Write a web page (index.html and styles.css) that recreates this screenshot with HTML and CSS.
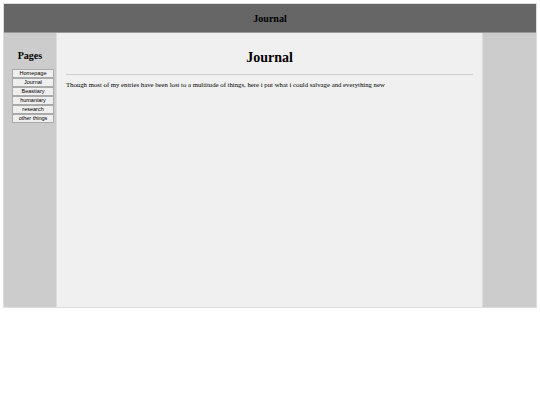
FILE: index.html
```html
<!DOCTYPE html>
<html>
<head>
<meta charset="utf-8">
<link rel="stylesheet" href="styles.css">
</head>
<body>
<div class="page">
  <div class="header">Journal</div>
  <div class="columns">
    <div class="side left">
      <h2 class="side-title">Pages</h2>
      <div class="nav">
        <button class="nav-btn">Homepage</button>
        <button class="nav-btn">Journal</button>
        <button class="nav-btn">Beastiary</button>
        <button class="nav-btn">humaniary</button>
        <button class="nav-btn">research</button>
        <button class="nav-btn">other things</button>
      </div>
    </div>
    <div class="main">
      <h1 class="title">Journal</h1>
      <hr class="rule">
      <p class="text">Though most of my entries have been lost to a multitude of things, here i put what i could salvage and everything new</p>
    </div>
    <div class="side right"></div>
  </div>
</div>
</body>
</html>
```
FILE: styles.css
```css
html, body { margin: 0; padding: 0; background: #fff; }
body { padding: 3px; font-family: "Liberation Serif", serif; }
.page { width: 534px; border: 1px solid #ddd; box-sizing: border-box; }
.header {
  height: 29px;
  background: #666;
  display: flex; align-items: center; justify-content: center;
  font-weight: bold; font-size: 10px; color: #000;
  border-bottom: 1px solid #999;
  box-sizing: border-box;
}
.columns { display: flex; height: 274px; }
.side { background: #ccc; }
.left { width: 52px; border-right: 1px solid #ddd; }
.right { width: 53px; border-left: 1px solid #ddd; }
.side-title { margin: 17px 0 0; font-size: 10px; text-align: center; font-weight: bold; }
.nav { display: flex; flex-direction: column; margin: 8px 0 0 8px; width: 42px; }
.nav-btn {
  height: 9px; margin: 0; padding: 0;
  font-family: "Liberation Sans", sans-serif; font-size: 5.5px; line-height: 7px;
  background: #efefef; border: 1px solid #aaa; color: #000;
  box-sizing: border-box;
}
.main { flex: 1; background: #f0f0f0; padding: 0 9px; }
.title { margin: 16px 0 0; font-size: 14px; text-align: center; font-weight: bold; line-height: 17px; }
.rule { margin: 8px 0 0; border: 0; border-top: 1px solid #ccc; height: 0; }
.text { margin: 6px 0 0; font-size: 6.75px; line-height: 8px; }
```
